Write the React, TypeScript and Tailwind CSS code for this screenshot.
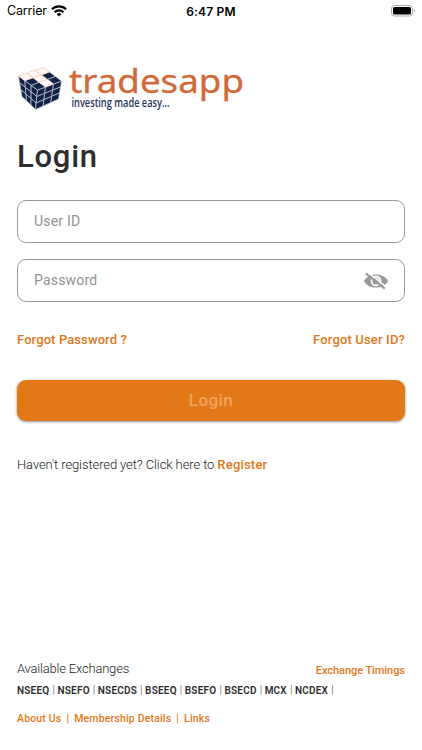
import React from "react";

const exchanges = ["NSEEQ", "NSEFO", "NSECDS", "BSEEQ", "BSEFO", "BSECD", "MCX", "NCDEX"];

const cells = [0, 1, 2].flatMap((i) => [0, 1, 2].map((j) => [i, j]));

// one 3x3 side of the cube, corners given clockwise
function CubeFace({ corners, top }: { corners: number[][], top?: boolean }) {
  const [a, b, c, d] = corners;
  const at = (i: number, j: number) => {
    const s = i / 3;
    const t = j / 3;
    return [0, 1]
      .map((k) => (1 - s) * (1 - t) * a[k] + s * (1 - t) * b[k] + s * t * c[k] + (1 - s) * t * d[k])
      .join(",");
  }
  const isLight = (i: number, j: number) => !!top && (j === 0 || i === 1);
  const sorted = [...cells].sort((p, q) => Number(isLight(p[0], p[1])) - Number(isLight(q[0], q[1])));
  return (
    <g>
      {sorted.map(([i, j]) => (
        <polygon
          key={`${i}${j}`}
          points={`${at(i, j)} ${at(i + 1, j)} ${at(i + 1, j + 1)} ${at(i, j + 1)}`}
          fill={isLight(i, j) ? "#fffaf7" : "#0f2145"}
          stroke={isLight(i, j) ? "#f6c6b0" : "#c3c9d6"}
          strokeWidth="0.7"
          strokeLinejoin="round"
        />
      ))}
    </g>
  )
}

function CubeLogo() {
  return (
    <svg width="46" height="46" viewBox="0 0 46 46">
      <CubeFace corners={[[1.5, 10], [20.5, 24], [18.5, 43.5], [5, 30.5]]} />
      <CubeFace corners={[[20.5, 24], [44.5, 15], [41.5, 33], [18.5, 43.5]]} />
      <CubeFace corners={[[1.5, 10], [26.5, 1.5], [44.5, 15], [20.5, 24]]} top />
    </svg>
  )
}

function EyeOff() {
  return (
    <svg width="24" height="18" viewBox="0 0 24 18">
      <path d="M0 9 C4 0.2 20 0.2 24 9 C20 17.8 4 17.8 0 9 Z" fill="#999" />
      <circle cx="12" cy="9" r="5.4" fill="#fff" />
      <circle cx="12" cy="9" r="3.6" fill="#999" />
      <circle cx="13.6" cy="7.4" r="1.1" fill="#fff" />
      <path d="M3.2 0 L22.4 15" stroke="#fff" strokeWidth="1.4" />
      <path d="M1.8 1.4 L20.8 16.6" stroke="#999" strokeWidth="2" />
    </svg>
  )
}

function StatusBar() {
  return (
    <div className="grid grid-cols-3 items-center h-[22px] px-[7px] text-[13px] text-black font-['Inter',sans-serif]">
      <div className="flex items-center gap-1">
        <span className="w-[40px] pt-px text-[12.5px] tracking-[-0.15px]">Carrier</span>
        <svg width="16" height="12" viewBox="0 0 16 12" fill="none" stroke="#000" strokeWidth="2.2">
          <path d="M1 4.3 A10 10 0 0 1 15 4.3" />
          <path d="M3.5 7.2 A6.4 6.4 0 0 1 12.5 7.2" />
          <path d="M8 11.6 L5.6 9.2 A3.4 3.4 0 0 1 10.4 9.2 Z" fill="#000" stroke="none" />
        </svg>
      </div>
      <span className="pt-px text-center font-semibold text-[12px] tracking-[0.2px]">6:47 PM</span>
      <div className="flex justify-end">
        <svg width="24" height="12" viewBox="0 0 24 12">
          <rect x="0.5" y="0.5" width="21" height="10.5" rx="3" fill="#fff" stroke="#aaa" />
          <rect x="2" y="2" width="18" height="7.5" rx="1.5" />
          <path d="M22.8 4 V7.6 Q24 7 24 5.8 T22.8 4" fill="#aaa" />
        </svg>
      </div>
    </div>
  )
}

export default function App() {
  const [user, setUser] = React.useState({
    id: "",
    password: ""
  })

  return (
    <div className="flex flex-col w-[422px] h-[750px] bg-white font-['Roboto',sans-serif] overflow-hidden">
      <StatusBar />
      <main className="flex flex-col grow px-[17px]">
        <div className="flex mt-[44px] h-[46px]">
          <CubeLogo />
          <svg className="overflow-visible" width="182" height="46" viewBox="0 0 182 46">
            <text x="6" y="26.5" textLength="175" lengthAdjust="spacingAndGlyphs" fontFamily="Noto Sans, sans-serif" fontSize="32" fill="#d2693a" stroke="#d2693a" strokeWidth="0.3">tradesapp</text>
            <text x="8.5" y="41" textLength="98" lengthAdjust="spacingAndGlyphs" fontFamily="Open Sans, sans-serif" fontWeight="600" fontSize="12" fill="#26345a">investing made easy...</text>
          </svg>
        </div>
        <h1 className="mt-[25px] h-10 leading-10 text-[31px] font-medium tracking-[0.75px] text-[#2d2d2f]">Login</h1>
        <input
          className="mt-[23px] h-[43px] px-[16px] pb-px border border-[#999] rounded-[9px] text-[14px] tracking-[0.2px] placeholder:text-[#929292]"
          value={user.id}
          onChange={(e) => setUser({ ...user, id: e.target.value })}
          placeholder="User ID"
        />
        <div className="flex items-center mt-4 h-[43px] px-[16px] border border-[#999] rounded-[9px]">
          <input
            className="grow pb-px text-[14px] tracking-[0.2px] placeholder:text-[#929292]"
            value={user.password}
            onChange={(e) => setUser({ ...user, password: e.target.value })}
            placeholder="Password"
          />
          <EyeOff />
        </div>
        <div className="flex justify-between mt-7 leading-5 text-[13px] font-medium text-[#e17819]">
          <a className="tracking-[0.1px]">Forgot Password ?</a>
          <a className="tracking-[0.15px]">Forgot User ID?</a>
        </div>
        <button className="mt-[30px] h-[41px] rounded-[9px] bg-[#e37818] text-[17px] font-medium tracking-[0.4px] text-[#f2a45f] shadow-[0_1px_3px_rgba(0,0,0,0.45)]">Login</button>
        <p className="mt-[34px] leading-5 text-[13px] font-light text-[#222]">
          <span className="tracking-[-0.1px]">Haven't registered yet? Click here to </span>
          <a className="font-medium tracking-[0.2px] text-[#e17819]">Register</a>
        </p>
        <footer className="mt-auto pb-[21px]">
          <div className="flex justify-between leading-5">
            <span className="text-[13px] font-light tracking-[-0.2px] text-[#222]">Available Exchanges</span>
            <a className="pt-[3px] text-[11px] leading-[18px] font-medium tracking-[-0.05px] text-[#e17819]">Exchange Timings</a>
          </div>
          <div className="flex items-center gap-[3px] pt-px h-5 text-[10px] font-semibold tracking-[0.22px] text-[#2d2d2f]">
            {exchanges.map((name) => (
              <React.Fragment key={name}>
                <span>{name}</span>
                <span className="w-[2px] -mt-px text-[11px] leading-5 font-light tracking-[0px] text-[#444]">|</span>
              </React.Fragment>
            ))}
          </div>
          <div className="flex gap-[5px] mt-[9px] leading-5 text-[10.5px] font-medium tracking-[0.17px] text-[#e17819]">
            <a>About Us</a>
            <span>|</span>
            <a>Membership Details</a>
            <span>|</span>
            <a>Links</a>
          </div>
        </footer>
      </main>
    </div>
  )
}
